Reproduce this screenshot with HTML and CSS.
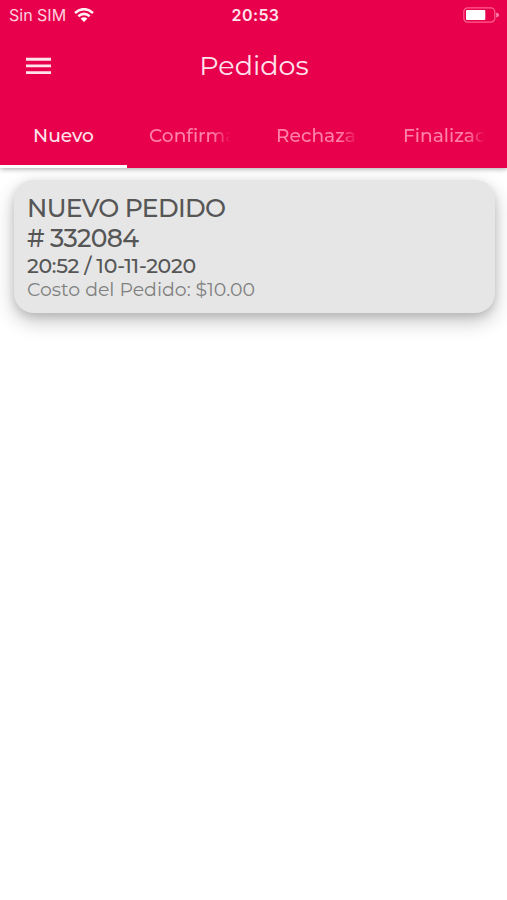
FILE: index.html
```html
<!DOCTYPE html>
<html lang="es">
<head>
<meta charset="utf-8">
<title>Pedidos</title>
<link rel="stylesheet" href="styles.css">
</head>
<body>
<header class="header">
  <div class="status">
    <div class="carrier"><span class="carrier-name">Sin SIM</span>
      <svg class="wifi" viewBox="0 0 20 14" width="20" height="14"><path d="M1 5Q10-2.6 19 5M4.3 8.2Q10 3.4 15.7 8.2" fill="none" stroke="#ffeef3" stroke-width="2.6"/><path d="M6.6 10.5Q10 7.8 13.4 10.5L10 13.9Z" fill="#fff"/></svg>
    </div>
    <span class="clock">20:53</span>
    <svg class="battery" viewBox="0 0 37 16" width="37" height="16"><rect x=".8" y=".8" width="31" height="14.4" rx="4" fill="none" stroke="#ff5f8f" stroke-width="1.2"/><rect x="3" y="3" width="19.3" height="10" rx="1" fill="#fff"/><path d="M33.2 5.5q3 .8 3 2.5t-3 2.5z" fill="#ff82a9"/></svg>
  </div>
  <div class="toolbar">
    <svg class="menu" viewBox="0 0 25 18" width="25" height="18"><path d="M0 2.2h25M0 8.9h25M0 15.6h25" stroke="#ffe3ec" stroke-width="2.9"/></svg>
    <h1 class="title">Pedidos</h1>
  </div>
  <nav class="tabs">
    <div class="tab active"><span class="label">Nuevo</span></div>
    <div class="tab"><span class="label">Confirmados</span></div>
    <div class="tab"><span class="label">Rechazados</span></div>
    <div class="tab"><span class="label">Finalizados</span></div>
  </nav>
</header>
<main class="content">
  <article class="card">
    <h2 class="heading">NUEVO PEDIDO</h2>
    <div class="number"># 332084</div>
    <div class="date">20:52 / 10-11-2020</div>
    <div class="cost">Costo del Pedido: $10.00</div>
  </article>
</main>
</body>
</html>
```
FILE: styles.css
```css
* { box-sizing: border-box; }
body { margin: 0; min-height: 900px; background: #fff; font-family: Montserrat, Inter, sans-serif; }
svg { display: block; }
.header { height: 168px; background: #e8004c; color: #ffe3ec; box-shadow: 0 1px 5px rgba(0,0,0,.35); position: relative; z-index: 1; }
.status { height: 30px; display: grid; grid-template-columns: 1fr 60px 1fr; align-items: center; padding: 0 7px 0 9px; font-family: Inter, sans-serif; }
.carrier { display: flex; align-items: center; gap: 8px; }
.carrier-name { width: 57px; font-size: 16px; line-height: 30px; white-space: nowrap; color: #ffd0df; }
.clock { padding-left: 2px; font-size: 16px; line-height: 30px; font-weight: 600; letter-spacing: .4px; text-align: center; white-space: nowrap; }
.battery { justify-self: end; }
.toolbar { height: 72px; display: grid; grid-template-columns: 1fr auto 1fr; align-items: center; padding: 0 26px; }
.title { margin: 0; padding-left: 1px; font-size: 27px; line-height: 32px; font-weight: 400; }
.tabs { height: 66px; display: grid; grid-template-columns: repeat(4, 127px); overflow: hidden; }
.tab { height: 66px; padding: 0 21px 0 22px; }
.tab.active { padding: 0 21px; border-bottom: 3px solid #fff; text-align: center; }
.label { display: block; font-size: 18.6px; line-height: 67px; font-weight: 500; font-variant-ligatures: none; white-space: nowrap; overflow: hidden; }
.tab:not(.active) .label { color: #ff80a8; -webkit-mask-image: linear-gradient(to right, #000 calc(100% - 20px), transparent calc(100% - 2px)); mask-image: linear-gradient(to right, #000 calc(100% - 20px), transparent calc(100% - 2px)); }
.content { padding: 12px 12px 0 14px; }
.card { height: 133px; padding: 13px 13px 0; border-radius: 20px; background: #e6e6e6; color: #565656; box-shadow: 0 8px 20px rgba(0,0,0,.24), 0 3px 8px rgba(0,0,0,.12); }
.heading, .number { margin: 0; font-size: 25px; line-height: 30px; font-weight: 500; letter-spacing: -.65px; white-space: nowrap; }
.date { font-size: 20.5px; line-height: 26px; font-weight: 500; letter-spacing: -.3px; }
.cost { font-size: 18.9px; line-height: 22px; color: #808080; }
```
